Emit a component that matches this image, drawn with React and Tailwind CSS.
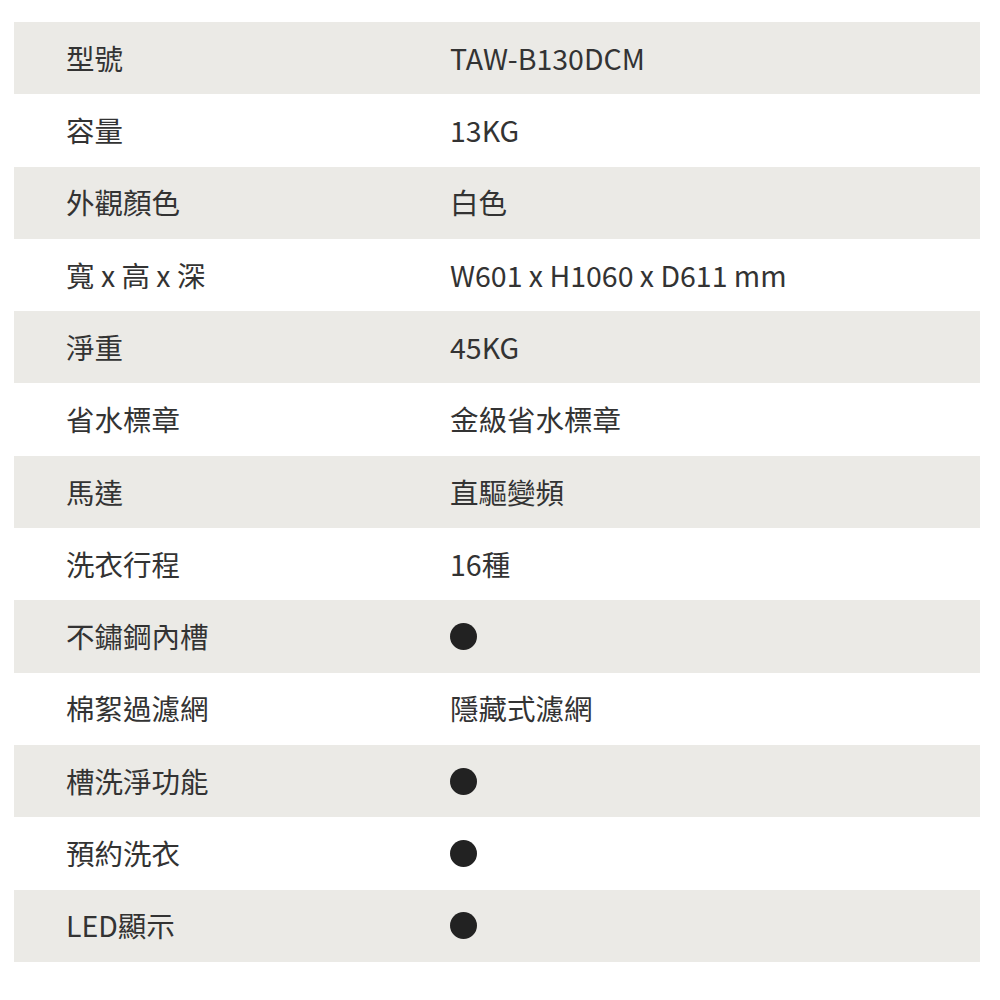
export default function App() {
  const rows = [
    ["型號", "TAW-B130DCM"],
    ["容量", "13KG"],
    ["外觀顏色", "白色"],
    ["寬 x 高 x 深", "W601 x H1060 x D611 mm"],
    ["淨重", "45KG"],
    ["省水標章", "金級省水標章"],
    ["馬達", "直驅變頻"],
    ["洗衣行程", "16種"],
    ["不鏽鋼內槽", null],
    ["棉絮過濾網", "隱藏式濾網"],
    ["槽洗淨功能", null],
    ["預約洗衣", null],
    ["LED顯示", null],
  ];
  return (
    <div className="w-[1000px] h-[1000px] bg-white pt-[22px] pl-[14px]" style={{ fontFamily: '"Noto Sans CJK TC", "Noto Sans", sans-serif' }}>
      <div className="w-[966px] flex flex-col">
        {rows.map(([k, v], i) => (
          <div key={i} className={`h-[72.3px] flex items-center text-[28.5px] text-[#333333] ${i % 2 === 0 ? "bg-[#ebeae6]" : "bg-white"}`}>
            <div className="w-[436px] shrink-0 pl-[52px]">{k}</div>
            <div className="flex-1">
              {v === null ? <div className="w-[27px] h-[27px] rounded-full bg-[#222222]"></div> : v}
            </div>
          </div>
        ))}
      </div>
    </div>
  );
}
